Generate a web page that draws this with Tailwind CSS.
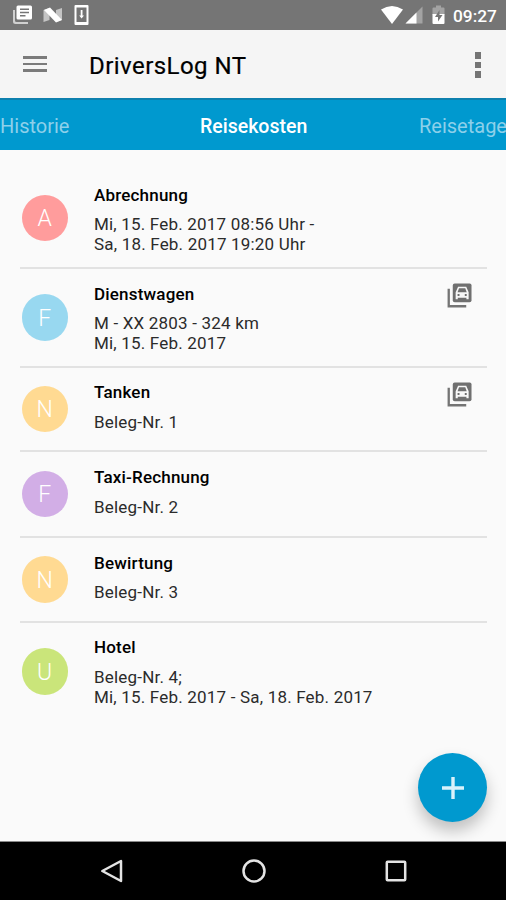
<!DOCTYPE html>
<html lang="de">
<head>
<meta charset="utf-8">
<title>DriversLog NT</title>
<script src="https://cdn.jsdelivr.net/npm/@tailwindcss/browser@4"></script>
</head>
<body class="bg-[#fafafa] font-['Roboto',sans-serif] text-black">
<div class="relative flex h-[900px] w-[506px] flex-col overflow-hidden">
  <!-- Status bar -->
  <div class="flex h-[30px] shrink-0 items-center justify-between bg-[#757575] pr-[9px] pl-[12px]">
    <div class="flex items-center gap-[10px]">
      <svg class="h-[20px] w-[21px]" viewBox="0 0 21 20"><path d="M1 5v11.500a2.500 2.500 0 0 0 2.500 2.500H16v-2H4.500a1.500 1.500 0 0 1-1.500-1.500V5z" fill="#d0d0d0"/><path fill-rule="evenodd" d="M6 .500h12.500A1.500 1.500 0 0 1 20 2v11a1.500 1.500 0 0 1-1.500 1.500H6A1.500 1.500 0 0 1 4.500 13V2A1.500 1.500 0 0 1 6 .500zM8 3.500v1.500h9V3.500zm0 3.300v1.500h9V6.800zM8 10v1.500h5.500V10z" fill="#fff"/></svg>
      <svg class="h-[18px] w-[20px]" viewBox="0 0 20 18"><path d="M.500 4l6-2V14l-6 2zM13 4L19 2v12l-6 2z" fill="#c4c4c4"/><path d="M1 4L7 1.500l12 12.500-6 2.500z" fill="#fff"/></svg>
      <svg class="ml-[1px] h-[20px] w-[15px]" viewBox="0 0 15 20"><path fill-rule="evenodd" d="M1.500 0h12A1 1 0 0 1 14.500 1v18a1 1 0 0 1-1 1h-12a1 1 0 0 1-1-1V1A1 1 0 0 1 1.500 0zM2.500 2.500v14.500h10V2.500z" fill="#fff"/><path d="M6.700 5h1.800v5.500h1.500L7.600 13.500 5.200 10.500h1.500z" fill="#fff"/></svg>
    </div>
    <div class="flex items-center">
      <svg class="h-[20px] w-[22px]" viewBox="0 0 22 20"><path d="M0 4.500Q11-2.500 22 4.500L11 19z" fill="#fff"/></svg>
      <svg class="ml-[2px] h-[18px] w-[18px]" viewBox="0 0 18 18"><path d="M17.500.500v17H.500z" fill="#a3a3a3"/><path d="M11.500 6.500v11H.500z" fill="#fff"/></svg>
      <svg class="ml-[9px] h-[20px] w-[13px]" viewBox="0 0 13 20"><path d="M1.500 2.500H4V.500h5v2h2.500a1 1 0 0 1 1 1V10H.500V3.500a1 1 0 0 1 1-1z" fill="#a3a3a3"/><path d="M.500 9h12v9a1 1 0 0 1-1 1h-10a1 1 0 0 1-1-1z" fill="#fff"/><path d="M7.500 5L3 12h3v4.500L10.500 10h-3z" fill="#757575"/></svg>
      <span class="ml-[8px] w-[44px] pt-[2px] text-[17.300px] leading-[28px] font-medium whitespace-nowrap text-white">09:27</span>
    </div>
  </div>
  <!-- App bar -->
  <div class="flex h-[68px] shrink-0 items-center bg-[#f5f5f5] pr-[25px] pl-[23px]">
    <div class="flex w-[24px] flex-col gap-[4px]">
      <div class="h-[2.500px] bg-[#7b7b7b]"></div>
      <div class="h-[2.500px] bg-[#7b7b7b]"></div>
      <div class="h-[2.500px] bg-[#7b7b7b]"></div>
    </div>
    <h1 class="ml-[42px] pt-[4px] text-[24px] leading-[30px] font-normal tracking-[0.450px] [-webkit-text-stroke:0.200px_black]">DriversLog NT</h1>
    <div class="mt-[2px] ml-auto flex flex-col gap-[3px]">
      <div class="size-[6.500px] bg-[#757575]"></div>
      <div class="size-[6.500px] bg-[#757575]"></div>
      <div class="size-[6.500px] bg-[#757575]"></div>
    </div>
  </div>
  <!-- Tabs -->
  <div class="flex h-[52px] shrink-0 items-center border-t-2 border-[#0d80ae] bg-[#0099cf] pt-[2px] text-[20px] leading-[48px] whitespace-nowrap text-[#8dd0ea]">
    <span class="w-[200px] shrink-0">Historie</span>
    <span class="w-[219px] shrink-0 pt-[1px] text-[19.500px] font-medium text-white">Reisekosten</span>
    <span class="shrink-0">Reisetage</span>
  </div>
  <!-- Expense list -->
  <main class="flex flex-1 flex-col pt-[18px] pr-[19px] pl-[20px] text-[17px] leading-[20px] tracking-[0.190px] text-[#2b2b2b]">
    <section class="flex h-[101px] shrink-0 items-center border-b-2 border-[#e2e2e2]">
      <div class="mt-[1px] ml-[1.500px] flex size-[46.500px] items-center justify-center rounded-full bg-[#ff9c9c] pt-[2px] text-[23px] font-light text-white">A</div>
      <div class="ml-[26px] self-start pt-[17px]">
        <h2 class="mb-[9px] text-[17px] font-medium text-black">Abrechnung</h2>
        <p>Mi, 15. Feb. 2017 08:56 Uhr -<br>Sa, 18. Feb. 2017 19:20 Uhr</p>
      </div>
    </section>
    <section class="flex h-[99px] shrink-0 items-center border-b-2 border-[#e2e2e2]">
      <div class="ml-[1.500px] flex size-[46.500px] items-center justify-center rounded-full bg-[#98d8f0] pt-[2px] text-[23px] font-light text-white">F</div>
      <div class="ml-[26px] self-start pt-[15px]">
        <h2 class="mb-[9px] text-[17px] font-medium text-black">Dienstwagen</h2>
        <p>M - XX 2803 - 324 km<br>Mi, 15. Feb. 2017</p>
      </div>
      <svg class="mt-[14px] mr-[15px] ml-auto h-[25px] w-[25px] self-start" viewBox="0 0 26 26"><path d="M1.800 6v18.200H20" fill="none" stroke="#747474" stroke-width="2.400"/><rect x="6" y=".500" width="19.500" height="19.500" rx="2" fill="#707070"/><path fill-rule="evenodd" d="M11.500 4h8.500l2.500 5.500V17h-2.300v-1.700h-9V17H9V9.500zM12.500 5.500L11 9.500h9.500L19 5.500zM11 11.500v2h2v-2zm7.500 0v2h2v-2z" fill="#f8f8f8"/></svg>
    </section>
    <section class="flex h-[84px] shrink-0 items-center border-b-2 border-[#e2e2e2]">
      <div class="ml-[1.500px] flex size-[46.500px] items-center justify-center rounded-full bg-[#ffda92] pt-[2px] text-[23px] font-light text-white">N</div>
      <div class="ml-[26px] self-start pt-[14px]">
        <h2 class="mb-[10px] text-[17px] font-medium text-black">Tanken</h2>
        <p>Beleg-Nr. 1</p>
      </div>
      <svg class="mt-[14px] mr-[15px] ml-auto h-[25px] w-[25px] self-start" viewBox="0 0 26 26"><path d="M1.800 6v18.200H20" fill="none" stroke="#747474" stroke-width="2.400"/><rect x="6" y=".500" width="19.500" height="19.500" rx="2" fill="#707070"/><path fill-rule="evenodd" d="M11.500 4h8.500l2.500 5.500V17h-2.300v-1.700h-9V17H9V9.500zM12.500 5.500L11 9.500h9.500L19 5.500zM11 11.500v2h2v-2zm7.500 0v2h2v-2z" fill="#f8f8f8"/></svg>
    </section>
    <section class="flex h-[86px] shrink-0 items-center border-b-2 border-[#e2e2e2]">
      <div class="ml-[1.500px] flex size-[46.500px] items-center justify-center rounded-full bg-[#d2aee6] pt-[2px] text-[23px] font-light text-white">F</div>
      <div class="ml-[26px] self-start pt-[15px]">
        <h2 class="mb-[10px] text-[17px] font-medium text-black">Taxi-Rechnung</h2>
        <p>Beleg-Nr. 2</p>
      </div>
    </section>
    <section class="flex h-[85px] shrink-0 items-center border-b-2 border-[#e2e2e2]">
      <div class="ml-[1.500px] flex size-[46.500px] items-center justify-center rounded-full bg-[#ffda92] pt-[2px] text-[23px] font-light text-white">N</div>
      <div class="ml-[26px] self-start pt-[15px]">
        <h2 class="mb-[9px] text-[17px] font-medium text-black">Bewirtung</h2>
        <p>Beleg-Nr. 3</p>
      </div>
    </section>
    <section class="flex h-[97px] shrink-0 items-center">
      <div class="ml-[1.500px] flex size-[46.500px] items-center justify-center rounded-full bg-[#cae57a] pt-[2px] text-[23px] font-light text-white">U</div>
      <div class="ml-[26px] self-start pt-[14px]">
        <h2 class="mb-[10px] text-[17px] font-medium text-black">Hotel</h2>
        <p>Beleg-Nr. 4;<br>Mi, 15. Feb. 2017 - Sa, 18. Feb. 2017</p>
      </div>
    </section>
  </main>
  <!-- Add button -->
  <button class="absolute top-[753px] left-[418px] flex size-[69px] items-center justify-center rounded-full bg-[#0099cf] shadow-[0_9px_16px_rgba(0,0,0,0.24)]">
    <svg class="h-[24px] w-[24px]" viewBox="0 0 24 24"><path d="M12 1v22M1 12h22" stroke="#d9f2fb" stroke-width="3.400"/></svg>
  </button>
  <!-- Navigation bar -->
  <nav class="relative flex h-[59px] shrink-0 items-center justify-center gap-[118px] border-t border-[#8a8a8a] bg-black pl-[2px]">
    <svg class="h-[24px] w-[24px]" viewBox="0 0 24 24"><path d="M21 2v20L2.300 12z" fill="none" stroke="#e4e4e4" stroke-width="2.500" stroke-linejoin="round"/></svg>
    <svg class="h-[24px] w-[24px]" viewBox="0 0 24 24"><circle cx="12" cy="12" r="10.500" fill="none" stroke="#e4e4e4" stroke-width="2.500"/></svg>
    <svg class="h-[24px] w-[24px]" viewBox="0 0 24 24"><rect x="2.800" y="2.800" width="18.400" height="18.400" rx=".800" fill="none" stroke="#e4e4e4" stroke-width="2.500"/></svg>
  </nav>
</div>
</body>
</html>
